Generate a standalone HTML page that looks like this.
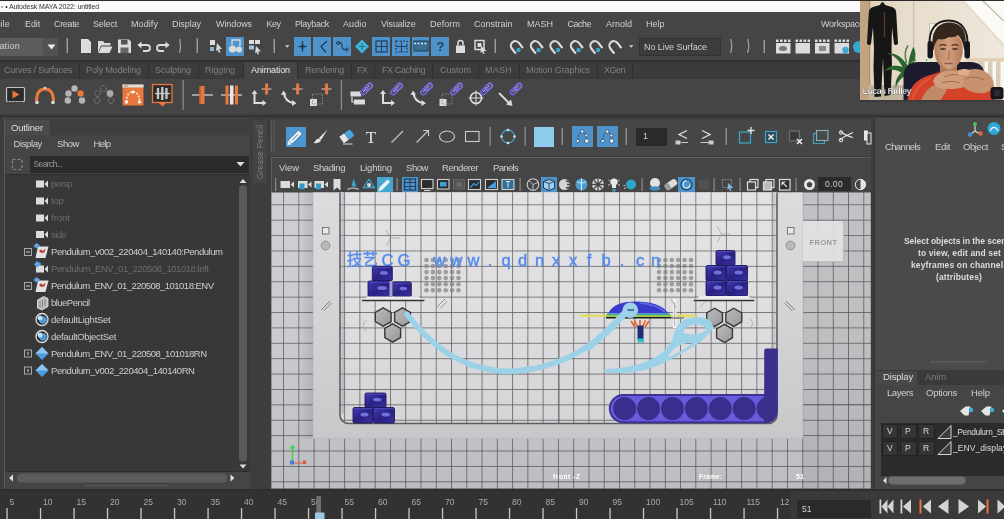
<!DOCTYPE html>
<html><head><meta charset="utf-8"><title>Autodesk MAYA 2022: untitled</title>
<style>
html,body{margin:0;padding:0;background:#444;}
#r{position:relative;width:1004px;height:519px;overflow:hidden;background:#444;font-family:"Liberation Sans","Noto Sans CJK SC",sans-serif;}
#r div,#r span,#r svg{position:absolute;white-space:nowrap;}
#r span{display:block;}
#r{filter:blur(0.350px);}
</style></head>
<body><div id="r">
<div style="left:0px;top:0px;width:1004px;height:11.5px;background:#fafafa;"></div>
<div style="left:0px;top:0px;width:1004px;height:1px;background:#2a2a2a;"></div>
<span style="left:1px;top:0.80px;font-size:7px;line-height:11px;color:#333;letter-spacing:-0.124px;">▫ • Autodesk MAYA 2022: untitled</span>
<div style="left:0px;top:11.5px;width:1004px;height:24.5px;background:#454545;"></div>
<span style="left:-5.5px;top:18.00px;font-size:9px;line-height:13px;color:#d0d0d0;letter-spacing:0.249px;">File</span>
<span style="left:25px;top:18.00px;font-size:9px;line-height:13px;color:#d0d0d0;letter-spacing:-0.127px;">Edit</span>
<span style="left:54px;top:18.00px;font-size:9px;line-height:13px;color:#d0d0d0;letter-spacing:-0.336px;">Create</span>
<span style="left:93px;top:18.00px;font-size:9px;line-height:13px;color:#d0d0d0;letter-spacing:-0.169px;">Select</span>
<span style="left:131px;top:18.00px;font-size:9px;line-height:13px;color:#d0d0d0;letter-spacing:0.082px;">Modify</span>
<span style="left:172px;top:18.00px;font-size:9px;line-height:13px;color:#d0d0d0;letter-spacing:-0.073px;">Display</span>
<span style="left:216px;top:18.00px;font-size:9px;line-height:13px;color:#d0d0d0;letter-spacing:-0.073px;">Windows</span>
<span style="left:266.5px;top:18.00px;font-size:9px;line-height:13px;color:#d0d0d0;letter-spacing:-0.503px;">Key</span>
<span style="left:295px;top:18.00px;font-size:9px;line-height:13px;color:#d0d0d0;letter-spacing:-0.315px;">Playback</span>
<span style="left:343px;top:18.00px;font-size:9px;line-height:13px;color:#d0d0d0;letter-spacing:0.096px;">Audio</span>
<span style="left:381px;top:18.00px;font-size:9px;line-height:13px;color:#d0d0d0;letter-spacing:-0.151px;">Visualize</span>
<span style="left:430px;top:18.00px;font-size:9px;line-height:13px;color:#d0d0d0;letter-spacing:0.082px;">Deform</span>
<span style="left:474px;top:18.00px;font-size:9px;line-height:13px;color:#d0d0d0;letter-spacing:-0.002px;">Constrain</span>
<span style="left:527px;top:18.00px;font-size:9px;line-height:13px;color:#d0d0d0;letter-spacing:-0.001px;">MASH</span>
<span style="left:567.5px;top:18.00px;font-size:9px;line-height:13px;color:#d0d0d0;letter-spacing:-0.504px;">Cache</span>
<span style="left:606px;top:18.00px;font-size:9px;line-height:13px;color:#d0d0d0;letter-spacing:-0.003px;">Arnold</span>
<span style="left:646px;top:18.00px;font-size:9px;line-height:13px;color:#d0d0d0;letter-spacing:-0.003px;">Help</span>
<span style="left:821px;top:18.00px;font-size:9px;line-height:13px;color:#d0d0d0;letter-spacing:-0.235px;">Workspace:</span>
<div style="left:0px;top:36px;width:1004px;height:24px;background:#454545;"></div>
<div style="left:0px;top:37.5px;width:43px;height:18.5px;background:#5c5c5c;"></div>
<div style="left:43px;top:37.5px;width:15px;height:18.5px;background:#525252;"></div>
<span style="left:-22px;top:40.00px;font-size:9px;line-height:13px;color:#d0d0d0;letter-spacing:0.219px;">Animation</span>
<div style="left:0px;top:59.5px;width:1004px;height:2px;background:#2f2f2f;"></div>
<div style="left:639px;top:38px;width:82px;height:18px;background:#3c3c3c;box-sizing:border-box;border:1px solid #333;"></div>
<span style="left:644px;top:40.50px;font-size:9px;line-height:13px;color:#d0d0d0;letter-spacing:-0.069px;">No Live Surface</span>
<div style="left:226px;top:37px;width:18.4px;height:19px;background:#4f93ca;"></div>
<div style="left:293.5px;top:37px;width:17.9px;height:19px;background:#4f93ca;"></div>
<div style="left:313px;top:37px;width:18.4px;height:19px;background:#4f93ca;"></div>
<div style="left:333px;top:37px;width:18.4px;height:19px;background:#4f93ca;"></div>
<div style="left:372px;top:37px;width:18.4px;height:19px;background:#4f93ca;"></div>
<div style="left:392px;top:37px;width:18.4px;height:19px;background:#4f93ca;"></div>
<div style="left:411.5px;top:37px;width:17.9px;height:19px;background:#4f93ca;"></div>
<div style="left:431px;top:37px;width:18.4px;height:19px;background:#4f93ca;"></div>
<div style="left:0px;top:61.5px;width:1004px;height:17px;background:#3b3b3b;"></div>
<div style="left:244px;top:61.5px;width:53px;height:17px;background:#464646;"></div>
<span style="left:4px;top:64.00px;font-size:9px;line-height:13px;color:#808080;letter-spacing:-0.208px;">Curves / Surfaces</span>
<span style="left:86px;top:64.00px;font-size:9px;line-height:13px;color:#808080;letter-spacing:-0.118px;">Poly Modeling</span>
<span style="left:155px;top:64.00px;font-size:9px;line-height:13px;color:#808080;letter-spacing:-0.114px;">Sculpting</span>
<span style="left:205px;top:64.00px;font-size:9px;line-height:13px;color:#808080;letter-spacing:-0.075px;">Rigging</span>
<span style="left:251px;top:64.00px;font-size:9px;line-height:13px;color:#e8e8e8;letter-spacing:-0.114px;">Animation</span>
<span style="left:305px;top:64.00px;font-size:9px;line-height:13px;color:#808080;letter-spacing:-0.281px;">Rendering</span>
<span style="left:357px;top:64.00px;font-size:9px;line-height:13px;color:#808080;letter-spacing:-0.751px;">FX</span>
<span style="left:382px;top:64.00px;font-size:9px;line-height:13px;color:#808080;letter-spacing:-0.403px;">FX Caching</span>
<span style="left:440px;top:64.00px;font-size:9px;line-height:13px;color:#808080;letter-spacing:-0.002px;">Custom</span>
<span style="left:485px;top:64.00px;font-size:9px;line-height:13px;color:#808080;letter-spacing:0.249px;">MASH</span>
<span style="left:526px;top:64.00px;font-size:9px;line-height:13px;color:#808080;letter-spacing:-0.102px;">Motion Graphics</span>
<span style="left:604px;top:64.00px;font-size:9px;line-height:13px;color:#808080;letter-spacing:-0.504px;">XGen</span>
<div style="left:79px;top:62px;width:1px;height:16px;background:#2e2e2e;"></div>
<div style="left:148px;top:62px;width:1px;height:16px;background:#2e2e2e;"></div>
<div style="left:198px;top:62px;width:1px;height:16px;background:#2e2e2e;"></div>
<div style="left:243px;top:62px;width:1px;height:16px;background:#2e2e2e;"></div>
<div style="left:297px;top:62px;width:1px;height:16px;background:#2e2e2e;"></div>
<div style="left:351px;top:62px;width:1px;height:16px;background:#2e2e2e;"></div>
<div style="left:374px;top:62px;width:1px;height:16px;background:#2e2e2e;"></div>
<div style="left:432px;top:62px;width:1px;height:16px;background:#2e2e2e;"></div>
<div style="left:478px;top:62px;width:1px;height:16px;background:#2e2e2e;"></div>
<div style="left:519px;top:62px;width:1px;height:16px;background:#2e2e2e;"></div>
<div style="left:597px;top:62px;width:1px;height:16px;background:#2e2e2e;"></div>
<div style="left:632px;top:62px;width:1px;height:16px;background:#2e2e2e;"></div>
<div style="left:0px;top:78.5px;width:1004px;height:36px;background:#454545;"></div>
<div style="left:0px;top:114px;width:1004px;height:4px;background:#3a3a3a;"></div>
<div style="left:0px;top:115.5px;width:1004px;height:1.5px;background:#303030;"></div>
<svg width="1004" height="120" viewBox="0 0 1004 120" style="left:0;top:0"><rect x="66.5" y="38" width="1.5" height="15" fill="#9a9a9a"/><path d="M47.5 44.5h8l-4 5z" fill="#eee"/><path d="M81 39h7l3 3v11h-10z" fill="#dcdcdc"/><path d="M98 41h5l1.5 2h6v2.5h-9.5l-3 7.5zM101.5 46.5h11l-3 6.5h-11z" fill="#dcdcdc"/><path d="M118 39.5h11l2 2v11.5h-13z" fill="#dcdcdc"/><rect x="121" y="40" width="6.5" height="4.5" fill="#555"/><rect x="120.5" y="47.5" width="8" height="5.5" fill="#666"/><path d="M138.5 45h8.5a3 3 0 0 1 0 6h-4" fill="none" stroke="#dcdcdc" stroke-width="1.8"/><path d="M141.5 41.5l-4 3.5 4 3.5z" fill="#dcdcdc"/><path d="M168.5 45h-8.5a3 3 0 0 0 0 6h4" fill="none" stroke="#dcdcdc" stroke-width="1.8"/><path d="M165.5 41.5l4 3.5-4 3.500z" fill="#dcdcdc"/><path d="M179.5 39q2 7 0 14" fill="none" stroke="#9a9a9a" stroke-width="1.3"/><rect x="196.5" y="38" width="1.5" height="15" fill="#9a9a9a"/><rect x="210" y="40" width="5" height="5" fill="#dcdcdc"/><rect x="210" y="47" width="4" height="4" fill="#7fb7dd"/><path d="M217 43l5 6h-3l1.5 3-1.5.8-1.5-3-1.500 1.500z" fill="#dcdcdc"/><circle cx="232.5" cy="49" r="3.5" fill="#dcdcdc"/><circle cx="239" cy="49.500" r="3" fill="#dcdcdc"/><path d="M232 45v-5h8v6" fill="none" stroke="#dcdcdc" stroke-width="1.3"/><rect x="249" y="40" width="5" height="4" fill="#dcdcdc"/><rect x="255" y="40" width="5" height="4" fill="#dcdcdc"/><rect x="249" y="45.500" width="5" height="4" fill="#9fc6e6"/><path d="M256 46l5 5.500h-3l1 2.500-1.400.6-1.100-2.500-1.500 1.500z" fill="#dcdcdc"/><rect x="273.500" y="39" width="1.5" height="14" fill="#9a9a9a"/><path d="M285 45h4.500l-2.250 3z" fill="#bbb"/><path d="M298 46.500h9M302.500 41v11" stroke="#1f3f5c" stroke-width="1.200" fill="none"/><circle cx="302.500" cy="46.500" r="1.800" fill="none" stroke="#1f3f5c"/><path d="M327 41l-6 5.500 5 6" stroke="#1f3f5c" stroke-width="1.300" fill="none"/><path d="M338 43q4-2 4 3t5 3" stroke="#1f3f5c" stroke-width="1.300" fill="none"/><circle cx="338" cy="43" r="1.500" fill="none" stroke="#1f3f5c"/><circle cx="347" cy="49.500" r="1.500" fill="none" stroke="#1f3f5c"/><path d="M362 39.500l7 7-7 7-7-7z" fill="#3fb6d8"/><path d="M358.500 46.500h7M362 43v7" stroke="#2a6f8a" stroke-width="1"/><rect x="376" y="41" width="11" height="11" fill="none" stroke="#1f3f5c" stroke-width="1.200"/><path d="M376 46.500h11M381.500 41v11" stroke="#1f3f5c" stroke-width="1"/><rect x="396" y="41" width="11" height="11" fill="none" stroke="#1f3f5c" stroke-width="1.200" stroke-dasharray="2 1.500"/><path d="M396 46.500h11M401.500 41v11" stroke="#1f3f5c" stroke-width="1"/><rect x="414" y="41" width="14" height="10" fill="#3a7092" stroke="#1f3f5c" stroke-width="1"/><path d="M414 43.500h14" stroke="#cfe6f5" stroke-width="1.500" stroke-dasharray="2 1.500"/><text x="440.500" y="51" font-size="13" font-weight="bold" fill="#1f3f5c" text-anchor="middle" font-family="Liberation Sans,sans-serif">?</text><rect x="456" y="45.500" width="9" height="7.500" fill="#dcdcdc"/><path d="M458 45.500v-2.500a2.500 2.500 0 0 1 5 0v2.500" fill="none" stroke="#dcdcdc" stroke-width="1.500"/><rect x="475" y="40.500" width="9" height="9" fill="none" stroke="#dcdcdc" stroke-width="1.500"/><rect x="477.500" y="43" width="4" height="4" fill="#dcdcdc"/><path d="M481 46l5.500 5h-3l1 2.500-1.400.6-1.100-2.500-1.500 1.500z" fill="#dcdcdc"/><rect x="494.500" y="39" width="1.500" height="14" fill="#9a9a9a"/><g transform="rotate(-38 516 46.500)"><path d="M511.5 52v-6.500a4.500 4.500 0 0 1 9 0v6.500" fill="none" stroke="#dcdcdc" stroke-width="2.200"/></g><circle cx="518.5" cy="50" r="2.200" fill="#3aa7c8"/><g transform="rotate(-38 536 46.500)"><path d="M531.5 52v-6.500a4.500 4.500 0 0 1 9 0v6.500" fill="none" stroke="#dcdcdc" stroke-width="2.200"/></g><circle cx="538.5" cy="50" r="2.200" fill="#3aa7c8"/><g transform="rotate(-38 555.5 46.500)"><path d="M551.0 52v-6.500a4.500 4.500 0 0 1 9 0v6.500" fill="none" stroke="#dcdcdc" stroke-width="2.200"/></g><circle cx="558.0" cy="50" r="2.200" fill="#3aa7c8"/><g transform="rotate(-38 576 46.500)"><path d="M571.5 52v-6.500a4.500 4.500 0 0 1 9 0v6.500" fill="none" stroke="#dcdcdc" stroke-width="2.200"/></g><circle cx="578.5" cy="50" r="2.200" fill="#3aa7c8"/><g transform="rotate(-38 595.5 46.500)"><path d="M591.0 52v-6.500a4.500 4.500 0 0 1 9 0v6.500" fill="none" stroke="#dcdcdc" stroke-width="2.200"/></g><circle cx="598.0" cy="50" r="2.200" fill="#3aa7c8"/><g transform="rotate(-38 614.5 46.500)"><path d="M610.0 52v-6.500a4.500 4.500 0 0 1 9 0v6.500" fill="none" stroke="#dcdcdc" stroke-width="2.200"/></g><path d="M629 45h4.500l-2.250 3z" fill="#bbb"/><path d="M730.500 39q2.500 7 0 14M747.500 39q2.500 7 0 14" fill="none" stroke="#9a9a9a" stroke-width="1.300"/><rect x="763.500" y="40" width="1.500" height="13" fill="#9a9a9a"/><rect x="776" y="43" width="14.500" height="10.500" fill="#dcdcdc"/><path d="M776 40.700h14.500" stroke="#dcdcdc" stroke-width="2.600" stroke-dasharray="2.600 1.400"/><rect x="795.5" y="43" width="14.500" height="10.500" fill="#dcdcdc"/><path d="M795.5 40.700h14.500" stroke="#dcdcdc" stroke-width="2.600" stroke-dasharray="2.600 1.400"/><rect x="815" y="43" width="14.500" height="10.500" fill="#dcdcdc"/><path d="M815 40.700h14.500" stroke="#dcdcdc" stroke-width="2.600" stroke-dasharray="2.600 1.400"/><rect x="834.5" y="43" width="14.500" height="10.500" fill="#dcdcdc"/><path d="M834.5 40.700h14.500" stroke="#dcdcdc" stroke-width="2.600" stroke-dasharray="2.600 1.400"/><ellipse cx="783" cy="48.500" rx="4" ry="2.500" fill="#777"/><rect x="819" y="46" width="7" height="5" fill="#888"/><circle cx="845.500" cy="50" r="3.200" fill="#3aa7d8"/><circle cx="859" cy="47" r="6" fill="#35a9d6"/><rect x="6.500" y="87.500" width="18" height="14" rx="1" fill="#2c2c2c" stroke="#c4c4c4" stroke-width="1.200"/><path d="M8 101h15" stroke="#2c2c2c" stroke-width="1" stroke-dasharray="1.500 1.500"/><path d="M12.500 90.500l7 4-7 4z" fill="#e8783c"/><path d="M36.500 101q0-12 8.500-12t8.500 12" fill="none" stroke="#e8783c" stroke-width="3"/><circle cx="37" cy="102.500" r="1.800" fill="#dcdcdc"/><circle cx="53" cy="102.500" r="1.800" fill="#dcdcdc"/><circle cx="45" cy="88" r="1.300" fill="#dcdcdc"/><circle cx="68.5" cy="93.5" r="3.200" fill="#b4b4b4"/><circle cx="67.8" cy="100.5" r="3.200" fill="#b4b4b4"/><circle cx="74.5" cy="88.5" r="3.200" fill="#b4b4b4"/><circle cx="80.5" cy="93.5" r="3.200" fill="#e8783c"/><circle cx="82" cy="100.5" r="3.200" fill="#b4b4b4"/><circle cx="97.5" cy="93.5" r="2.900" fill="none" stroke="#8a8a8a" stroke-width="1" stroke-dasharray="1.500 1"/><circle cx="97" cy="100.5" r="2.900" fill="none" stroke="#8a8a8a" stroke-width="1" stroke-dasharray="1.500 1"/><circle cx="103.5" cy="88.5" r="2.900" fill="none" stroke="#8a8a8a" stroke-width="1" stroke-dasharray="1.500 1"/><circle cx="111" cy="100.5" r="2.900" fill="none" stroke="#8a8a8a" stroke-width="1" stroke-dasharray="1.500 1"/><circle cx="110" cy="93.5" r="3.400" fill="#a9a9a9"/><rect x="122.500" y="84.500" width="21" height="21" fill="#e8783c"/><rect x="122.500" y="84.500" width="21" height="3" fill="#ddd"/><path d="M126.500 102q0-10 6.500-10t6.500 10" fill="none" stroke="#fbe9dd" stroke-width="1.800" stroke-dasharray="1.800 1.600"/><path d="M124.500 86h3" stroke="#444" stroke-width="1.200" stroke-dasharray="1 1"/><circle cx="126.500" cy="102" r="1.600" fill="#fff"/><circle cx="139.500" cy="102" r="1.600" fill="#fff"/><circle cx="133" cy="92" r="1.400" fill="#fff"/><rect x="152.500" y="84.500" width="19.500" height="18" fill="#2e2e2e" stroke="#e8783c" stroke-width="1.300"/><path d="M155 93.500h15" stroke="#c8c8c8" stroke-width="1.300"/><path d="M158 88v11M162.300 87v13M166.500 88v11" stroke="#c8c8c8" stroke-width="2.300"/><path d="M159 103h7l-3.500 3.500z" fill="#e8783c"/><rect x="182.500" y="80" width="1.300" height="30" fill="#8a8a8a"/><path d="M192 95h21" stroke="#cfcfcf" stroke-width="1.300"/><rect x="199.500" y="86" width="5" height="18" fill="#e8783c"/><rect x="199.500" y="86" width="1.200" height="18" fill="#b85a28"/><path d="M221 95h21" stroke="#cfcfcf" stroke-width="1.300"/><rect x="225.500" y="85.500" width="3" height="19" fill="#e8783c"/><rect x="230" y="85.500" width="3.500" height="19" fill="#e6e6e6"/><rect x="235" y="85.500" width="3" height="19" fill="#e8783c"/><path d="M254.500 92v11h9" fill="none" stroke="#dcdcdc" stroke-width="2"/><path d="M251.500 94l3-4 3 4zM262.500 100l4 3-4 3z" fill="#dcdcdc"/><path d="M261.5 89h10" stroke="#e9cdbb" stroke-width="1"/><rect x="265.1" y="83.5" width="3" height="11" fill="#e8783c"/><path d="M284 93q1 9 10 10" fill="none" stroke="#dcdcdc" stroke-width="2.200"/><path d="M281 95l2.500-4.500 3 4zM292 100l4.500 3.200-4.500 2.800z" fill="#dcdcdc"/><path d="M292.5 89h10" stroke="#e9cdbb" stroke-width="1"/><rect x="296.1" y="83.5" width="3" height="11" fill="#e8783c"/><rect x="310" y="99" width="7" height="7" fill="#dcdcdc"/><rect x="312.500" y="94" width="10" height="10" fill="none" stroke="#8a8a8a" stroke-dasharray="1.500 1.200"/><path d="M321.5 89h10" stroke="#e9cdbb" stroke-width="1"/><rect x="325.1" y="83.5" width="3" height="11" fill="#e8783c"/><rect x="340.800" y="80" width="1.300" height="30" fill="#8a8a8a"/><rect x="350.500" y="91.500" width="10.500" height="5" fill="#dcdcdc"/><rect x="354" y="99.500" width="11" height="5" fill="#dcdcdc"/><path d="M352 97v5h2" fill="none" stroke="#dcdcdc" stroke-width="1.200"/><g transform="rotate(-45 366.5 89)"><rect x="359.5" y="86.7" width="8" height="4.600" rx="2.300" fill="none" stroke="#6d62cf" stroke-width="1.800"/><rect x="365.5" y="86.7" width="8" height="4.600" rx="2.300" fill="none" stroke="#7a70dc" stroke-width="1.800"/><path d="M362.0 88.7h3M368.0 88.7h3" stroke="#e0dcff" stroke-width="0.900"/></g><path d="M383 92v11h9" fill="none" stroke="#dcdcdc" stroke-width="2"/><path d="M380 94l3-4 3 4zM391 100l4 3-4 3z" fill="#dcdcdc"/><g transform="rotate(-45 396.5 89)"><rect x="389.5" y="86.7" width="8" height="4.600" rx="2.300" fill="none" stroke="#6d62cf" stroke-width="1.800"/><rect x="395.5" y="86.7" width="8" height="4.600" rx="2.300" fill="none" stroke="#7a70dc" stroke-width="1.800"/><path d="M392.0 88.7h3M398.0 88.7h3" stroke="#e0dcff" stroke-width="0.900"/></g><path d="M413.500 93q1 9 10 10" fill="none" stroke="#dcdcdc" stroke-width="2.200"/><path d="M410.500 95l2.500-4.500 3 4zM421.500 100l4.500 3.200-4.500 2.800z" fill="#dcdcdc"/><g transform="rotate(-45 426.5 89)"><rect x="419.5" y="86.7" width="8" height="4.600" rx="2.300" fill="none" stroke="#6d62cf" stroke-width="1.800"/><rect x="425.5" y="86.7" width="8" height="4.600" rx="2.300" fill="none" stroke="#7a70dc" stroke-width="1.800"/><path d="M422.0 88.7h3M428.0 88.7h3" stroke="#e0dcff" stroke-width="0.900"/></g><rect x="439.500" y="99" width="7" height="7" fill="#dcdcdc"/><rect x="442" y="94" width="10" height="10" fill="none" stroke="#8a8a8a" stroke-dasharray="1.500 1.200"/><g transform="rotate(-45 456.5 89)"><rect x="449.5" y="86.7" width="8" height="4.600" rx="2.300" fill="none" stroke="#6d62cf" stroke-width="1.800"/><rect x="455.5" y="86.7" width="8" height="4.600" rx="2.300" fill="none" stroke="#7a70dc" stroke-width="1.800"/><path d="M452.0 88.7h3M458.0 88.7h3" stroke="#e0dcff" stroke-width="0.900"/></g><circle cx="476" cy="98" r="5.500" fill="none" stroke="#dcdcdc" stroke-width="1.600"/><path d="M468.500 98h15M476 90.500v15" stroke="#dcdcdc" stroke-width="1.100"/><g transform="rotate(-45 486.5 89)"><rect x="479.5" y="86.7" width="8" height="4.600" rx="2.300" fill="none" stroke="#6d62cf" stroke-width="1.800"/><rect x="485.5" y="86.7" width="8" height="4.600" rx="2.300" fill="none" stroke="#7a70dc" stroke-width="1.800"/><path d="M482.0 88.7h3M488.0 88.7h3" stroke="#e0dcff" stroke-width="0.900"/></g><path d="M499 93l10 10" stroke="#dcdcdc" stroke-width="1.800"/><path d="M512.500 106l-6.500-1.500 5-5z" fill="#dcdcdc"/><g transform="rotate(-45 516 89)"><rect x="509" y="86.7" width="8" height="4.600" rx="2.300" fill="none" stroke="#6d62cf" stroke-width="1.800"/><rect x="515" y="86.7" width="8" height="4.600" rx="2.300" fill="none" stroke="#7a70dc" stroke-width="1.800"/><path d="M511.5 88.7h3M517.5 88.7h3" stroke="#e0dcff" stroke-width="0.900"/></g></svg>
<div style="left:0px;top:117px;width:1004px;height:373px;background:#3d3d3d;"></div>
<div style="left:252.5px;top:120px;width:14.5px;height:62.5px;background:#444444;"></div>
<span style="left:228.750px;top:146px;width:62px;height:12px;line-height:12px;font-size:8.500px;color:#7c7c7c;transform:rotate(-90deg);text-align:center;letter-spacing:0.100px">Grease Pencil</span>
<div style="left:269.5px;top:118.5px;width:601.5px;height:37.5px;background:#464646;"></div>
<div style="left:285.75px;top:127px;width:19.75px;height:19.75px;background:#4b97d4;"></div>
<div style="left:534px;top:127px;width:19.5px;height:19.5px;background:#8fcbea;"></div>
<div style="left:572px;top:126px;width:20.5px;height:21px;background:#4f93ca;"></div>
<div style="left:597px;top:126px;width:20.5px;height:21px;background:#4f93ca;"></div>
<div style="left:636px;top:128px;width:30.5px;height:17.5px;background:#2a2a2a;"></div>
<span style="left:643px;top:130.00px;font-size:9px;line-height:13px;color:#cfcfcf;letter-spacing:0.000px;">1</span>
<div style="left:270.5px;top:156.5px;width:600.5px;height:36.5px;background:#454545;"></div>
<div style="left:270.5px;top:156.5px;width:600.5px;height:1px;background:#5e5e5e;"></div>
<div style="left:270.5px;top:156.5px;width:1px;height:333px;background:#5e5e5e;"></div>
<span style="left:279px;top:161.25px;font-size:9.5px;line-height:13.5px;color:#d0d0d0;letter-spacing:-0.105px;">View</span>
<span style="left:313px;top:161.25px;font-size:9.5px;line-height:13.5px;color:#d0d0d0;letter-spacing:-0.409px;">Shading</span>
<span style="left:360px;top:161.25px;font-size:9.5px;line-height:13.5px;color:#d0d0d0;letter-spacing:-0.160px;">Lighting</span>
<span style="left:406px;top:161.25px;font-size:9.5px;line-height:13.5px;color:#d0d0d0;letter-spacing:-0.441px;">Show</span>
<span style="left:442px;top:161.25px;font-size:9.5px;line-height:13.5px;color:#d0d0d0;letter-spacing:-0.451px;">Renderer</span>
<span style="left:493px;top:161.25px;font-size:9.5px;line-height:13.5px;color:#d0d0d0;letter-spacing:-0.674px;">Panels</span>
<div style="left:377px;top:176.5px;width:16px;height:16px;background:#45a6d0;"></div>
<div style="left:402px;top:176.5px;width:16px;height:16px;background:#4f93ca;"></div>
<div style="left:541px;top:176.5px;width:16px;height:16px;background:#4f93ca;"></div>
<div style="left:678px;top:176.5px;width:17px;height:16px;background:#4f93ca;"></div>
<div style="left:818px;top:177px;width:32.5px;height:13.5px;background:#2b2b2b;"></div>
<span style="left:825px;top:177.75px;font-size:8.5px;line-height:12.5px;color:#d0d0d0;letter-spacing:0.365px;">0.00</span>
<svg width="1004" height="519" viewBox="0 0 1004 519" style="left:0;top:0;font-family:'Liberation Sans','Noto Sans CJK SC',sans-serif"><defs><pattern id="grid" x="283.050" y="204.300" width="15.270" height="15.390" patternUnits="userSpaceOnUse"><rect width="15.270" height="15.390" fill="#cecfd2"/><path d="M0.500 0v15.390M0 0.500h15.270" stroke="#5c5c60" stroke-width="0.750"/></pattern><pattern id="grid2" x="283.050" y="204.300" width="15.270" height="15.390" patternUnits="userSpaceOnUse"><rect width="15.270" height="15.390" fill="#e3e3e6"/><path d="M0.500 0v15.390M0 0.500h15.270" stroke="#5c5c60" stroke-width="0.750"/></pattern><linearGradient id="shade" x1="0" y1="0" x2="0" y2="1"><stop offset="0" stop-color="#000" stop-opacity="0"/><stop offset="0.500" stop-color="#000" stop-opacity="0.020"/><stop offset="1" stop-color="#000" stop-opacity="0.085"/></linearGradient><linearGradient id="shadeI" x1="0" y1="0" x2="0" y2="1"><stop offset="0" stop-color="#000" stop-opacity="0"/><stop offset="0.500" stop-color="#000" stop-opacity="0.020"/><stop offset="1" stop-color="#000" stop-opacity="0.065"/></linearGradient><linearGradient id="frameg" x1="0" y1="0" x2="0" y2="1"><stop offset="0" stop-color="#dcdcde"/><stop offset="0.500" stop-color="#d4d4d7"/><stop offset="1" stop-color="#c8c8cb"/></linearGradient><linearGradient id="lsh" x1="0" y1="0" x2="1" y2="0"><stop offset="0" stop-color="#000" stop-opacity="0"/><stop offset="1" stop-color="#000" stop-opacity="0.110"/></linearGradient><linearGradient id="cube" x1="0" y1="0" x2="1" y2="1"><stop offset="0" stop-color="#463cb4"/><stop offset="0.500" stop-color="#2a2182"/><stop offset="1" stop-color="#3a309e"/></linearGradient><linearGradient id="hexg" x1="0" y1="0" x2="1" y2="1"><stop offset="0" stop-color="#bcbcbe"/><stop offset="1" stop-color="#98989a"/></linearGradient><filter id="b1"><feGaussianBlur stdDeviation="0.600"/></filter></defs><rect x="271.5" y="192.5" width="599.5" height="296" fill="url(#grid)"/><rect x="271.5" y="192.5" width="599.5" height="296" fill="url(#shade)"/><rect x="299" y="192.5" width="14" height="246" fill="url(#lsh)"/><rect x="803" y="192.5" width="68" height="296" fill="#000" opacity="0.060"/><path d="M803 404.600H871" stroke="#48484c" stroke-width="1" opacity="0.450"/><path d="M313 192.500H803V438.500H313z" fill="url(#frameg)"/><path d="M340 192.500V415a8.500 8.500 0 0 0 8.500 8.500H768.500a8.500 8.500 0 0 0 8.500-8.500V192.500z" fill="url(#grid2)"/><path d="M340 192.500V415a8.500 8.500 0 0 0 8.500 8.500H768.500a8.500 8.500 0 0 0 8.500-8.500V192.500z" fill="url(#shadeI)"/><path d="M559.400 192.500V423" stroke="#48484c" stroke-width="1" opacity="0.400"/><path d="M342.800 192.500V414" stroke="#9a9a9e" stroke-width="2.600" opacity="0.450"/><path d="M774.200 192.500V414" stroke="#9a9a9e" stroke-width="2.600" opacity="0.350"/><path d="M340 192.500V415a8.500 8.500 0 0 0 8.500 8.500H768.500a8.500 8.500 0 0 0 8.500-8.500V192.500" fill="none" stroke="#5e5e62" stroke-width="1.600"/><path d="M313 192.500V438.500H803V192.500" fill="none" stroke="#b4b4b8" stroke-width="0.800" opacity="0.700"/><rect x="322.5" y="227.500" width="6.500" height="6.500" fill="#e8e8e8" stroke="#777" stroke-width="1"/><circle cx="325.5" cy="245.500" r="4.500" fill="#b9b9bb" stroke="#8c8c8c" stroke-width="0.800"/><rect x="787.5" y="227.500" width="6.500" height="6.500" fill="#e8e8e8" stroke="#777" stroke-width="1"/><circle cx="790.5" cy="245.500" r="4.500" fill="#b9b9bb" stroke="#8c8c8c" stroke-width="0.800"/><path d="M321 310l9-9M323.500 311l8-8" stroke="#777" stroke-width="0.900"/><path d="M786 301l9 9M784.500 303l8 8" stroke="#777" stroke-width="0.900"/><rect x="803" y="221" width="40.500" height="40.500" fill="#e3e3e4" opacity="0.920"/><path d="M803 261.500h40.500v-40.500" fill="none" stroke="#bdbdbd" stroke-width="1"/><text x="823.500" y="245" font-size="7.500" font-weight="bold" fill="#9a9a9a" text-anchor="middle" letter-spacing="0.400">FRONT</text><path d="M386 230l4.500 8h9M390.500 238l-4 8" stroke="#8a8a8a" stroke-width="0.800" fill="none" opacity="0.800"/><path d="M717 226l4.500 8h9M721.500 234l-4 8" stroke="#9a9a9a" stroke-width="0.800" fill="none" opacity="0.800"/><circle cx="426.5" cy="260.0" r="2.300" fill="#808083" opacity="0.700"/><circle cx="426.5" cy="266.1" r="2.300" fill="#808083" opacity="0.700"/><circle cx="426.5" cy="272.1" r="2.300" fill="#808083" opacity="0.700"/><circle cx="426.5" cy="278.1" r="2.300" fill="#808083" opacity="0.700"/><circle cx="426.5" cy="284.2" r="2.300" fill="#808083" opacity="0.700"/><circle cx="426.5" cy="290.2" r="2.300" fill="#808083" opacity="0.700"/><circle cx="432.9" cy="260.0" r="2.300" fill="#808083" opacity="0.700"/><circle cx="432.9" cy="266.1" r="2.300" fill="#808083" opacity="0.700"/><circle cx="432.9" cy="272.1" r="2.300" fill="#808083" opacity="0.700"/><circle cx="432.9" cy="278.1" r="2.300" fill="#808083" opacity="0.700"/><circle cx="432.9" cy="284.2" r="2.300" fill="#808083" opacity="0.700"/><circle cx="432.9" cy="290.2" r="2.300" fill="#808083" opacity="0.700"/><circle cx="439.3" cy="260.0" r="2.300" fill="#808083" opacity="0.700"/><circle cx="439.3" cy="266.1" r="2.300" fill="#808083" opacity="0.700"/><circle cx="439.3" cy="272.1" r="2.300" fill="#808083" opacity="0.700"/><circle cx="439.3" cy="278.1" r="2.300" fill="#808083" opacity="0.700"/><circle cx="439.3" cy="284.2" r="2.300" fill="#808083" opacity="0.700"/><circle cx="439.3" cy="290.2" r="2.300" fill="#808083" opacity="0.700"/><circle cx="445.7" cy="260.0" r="2.300" fill="#808083" opacity="0.700"/><circle cx="445.7" cy="266.1" r="2.300" fill="#808083" opacity="0.700"/><circle cx="445.7" cy="272.1" r="2.300" fill="#808083" opacity="0.700"/><circle cx="445.7" cy="278.1" r="2.300" fill="#808083" opacity="0.700"/><circle cx="445.7" cy="284.2" r="2.300" fill="#808083" opacity="0.700"/><circle cx="445.7" cy="290.2" r="2.300" fill="#808083" opacity="0.700"/><circle cx="452.1" cy="260.0" r="2.300" fill="#808083" opacity="0.700"/><circle cx="452.1" cy="266.1" r="2.300" fill="#808083" opacity="0.700"/><circle cx="452.1" cy="272.1" r="2.300" fill="#808083" opacity="0.700"/><circle cx="452.1" cy="278.1" r="2.300" fill="#808083" opacity="0.700"/><circle cx="452.1" cy="284.2" r="2.300" fill="#808083" opacity="0.700"/><circle cx="452.1" cy="290.2" r="2.300" fill="#808083" opacity="0.700"/><circle cx="458.5" cy="260.0" r="2.300" fill="#808083" opacity="0.700"/><circle cx="458.5" cy="266.1" r="2.300" fill="#808083" opacity="0.700"/><circle cx="458.5" cy="272.1" r="2.300" fill="#808083" opacity="0.700"/><circle cx="458.5" cy="278.1" r="2.300" fill="#808083" opacity="0.700"/><circle cx="458.5" cy="284.2" r="2.300" fill="#808083" opacity="0.700"/><circle cx="458.5" cy="290.2" r="2.300" fill="#808083" opacity="0.700"/><circle cx="659.0" cy="260.0" r="2.300" fill="#808083" opacity="0.700"/><circle cx="659.0" cy="266.1" r="2.300" fill="#808083" opacity="0.700"/><circle cx="659.0" cy="272.1" r="2.300" fill="#808083" opacity="0.700"/><circle cx="659.0" cy="278.1" r="2.300" fill="#808083" opacity="0.700"/><circle cx="659.0" cy="284.2" r="2.300" fill="#808083" opacity="0.700"/><circle cx="659.0" cy="290.2" r="2.300" fill="#808083" opacity="0.700"/><circle cx="665.4" cy="260.0" r="2.300" fill="#808083" opacity="0.700"/><circle cx="665.4" cy="266.1" r="2.300" fill="#808083" opacity="0.700"/><circle cx="665.4" cy="272.1" r="2.300" fill="#808083" opacity="0.700"/><circle cx="665.4" cy="278.1" r="2.300" fill="#808083" opacity="0.700"/><circle cx="665.4" cy="284.2" r="2.300" fill="#808083" opacity="0.700"/><circle cx="665.4" cy="290.2" r="2.300" fill="#808083" opacity="0.700"/><circle cx="671.8" cy="260.0" r="2.300" fill="#808083" opacity="0.700"/><circle cx="671.8" cy="266.1" r="2.300" fill="#808083" opacity="0.700"/><circle cx="671.8" cy="272.1" r="2.300" fill="#808083" opacity="0.700"/><circle cx="671.8" cy="278.1" r="2.300" fill="#808083" opacity="0.700"/><circle cx="671.8" cy="284.2" r="2.300" fill="#808083" opacity="0.700"/><circle cx="671.8" cy="290.2" r="2.300" fill="#808083" opacity="0.700"/><circle cx="678.2" cy="260.0" r="2.300" fill="#808083" opacity="0.700"/><circle cx="678.2" cy="266.1" r="2.300" fill="#808083" opacity="0.700"/><circle cx="678.2" cy="272.1" r="2.300" fill="#808083" opacity="0.700"/><circle cx="678.2" cy="278.1" r="2.300" fill="#808083" opacity="0.700"/><circle cx="678.2" cy="284.2" r="2.300" fill="#808083" opacity="0.700"/><circle cx="678.2" cy="290.2" r="2.300" fill="#808083" opacity="0.700"/><circle cx="684.6" cy="260.0" r="2.300" fill="#808083" opacity="0.700"/><circle cx="684.6" cy="266.1" r="2.300" fill="#808083" opacity="0.700"/><circle cx="684.6" cy="272.1" r="2.300" fill="#808083" opacity="0.700"/><circle cx="684.6" cy="278.1" r="2.300" fill="#808083" opacity="0.700"/><circle cx="684.6" cy="284.2" r="2.300" fill="#808083" opacity="0.700"/><circle cx="684.6" cy="290.2" r="2.300" fill="#808083" opacity="0.700"/><circle cx="691.0" cy="260.0" r="2.300" fill="#808083" opacity="0.700"/><circle cx="691.0" cy="266.1" r="2.300" fill="#808083" opacity="0.700"/><circle cx="691.0" cy="272.1" r="2.300" fill="#808083" opacity="0.700"/><circle cx="691.0" cy="278.1" r="2.300" fill="#808083" opacity="0.700"/><circle cx="691.0" cy="284.2" r="2.300" fill="#808083" opacity="0.700"/><circle cx="691.0" cy="290.2" r="2.300" fill="#808083" opacity="0.700"/><path d="M437 307l8-8M440 308.500l7-7" stroke="#8a8a8c" stroke-width="0.900"/><path d="M366 320l-3 5.500 3 5.500" stroke="#aaa" stroke-width="0.800" fill="none"/><path d="M700 307l8-8" stroke="#8a8a8c" stroke-width="0.900" opacity="0.600"/><path d="M750 318l3 5.500-3 5.500" stroke="#aaa" stroke-width="0.800" fill="none"/><text y="265.500" font-size="16.500" fill="#558aee" stroke="#558aee" stroke-width="0.450" text-anchor="middle" x="439.500 456.500 473.500 490 506 522.500 539.500 556 573 589 606 622 640 655.500">www.qdnxxfb.cn</text><text y="265.500" font-size="16.500" fill="#558aee" stroke="#558aee" stroke-width="0.450" text-anchor="middle" x="387.500 404">CG</text><text x="347" y="265" font-size="15.500" fill="#558aee" stroke="#558aee" stroke-width="0.350">技艺</text><rect x="372.3" y="266.3" width="20" height="14.7" rx="1.500" fill="url(#cube)" stroke="#1d175c" stroke-width="0.900"/><ellipse cx="383.90000000000003" cy="272.915" rx="4.0" ry="1.911" fill="#7d86f2" opacity="0.800"/><path d="M373.3 267.5h18" stroke="#5a52d0" stroke-width="1" opacity="0.700"/><rect x="368" y="281" width="24.3" height="15.6" rx="1.500" fill="url(#cube)" stroke="#1d175c" stroke-width="0.900"/><ellipse cx="382.094" cy="288.02" rx="4.86" ry="2.028" fill="#7d86f2" opacity="0.800"/><path d="M369 282.2h22.3" stroke="#5a52d0" stroke-width="1" opacity="0.700"/><rect x="392.3" y="282" width="19" height="14.5" rx="1.500" fill="url(#cube)" stroke="#1d175c" stroke-width="0.900"/><ellipse cx="403.32" cy="288.525" rx="3.8000000000000003" ry="1.885" fill="#7d86f2" opacity="0.800"/><path d="M393.3 283.2h17" stroke="#5a52d0" stroke-width="1" opacity="0.700"/><path d="M362 300.400l6-4h50l6.400 4z" fill="#ececee"/><path d="M362 300.400h62.400" stroke="#333" stroke-width="1.500"/><rect x="389.500" y="281" width="3" height="15" fill="#d8d8f0" opacity="0.700"/><rect x="716" y="250.5" width="19" height="15" rx="1.500" fill="url(#cube)" stroke="#1d175c" stroke-width="0.900"/><ellipse cx="727.02" cy="257.25" rx="3.8000000000000003" ry="1.9500000000000002" fill="#7d86f2" opacity="0.800"/><path d="M717 251.7h17" stroke="#5a52d0" stroke-width="1" opacity="0.700"/><rect x="706" y="265.5" width="20" height="15.5" rx="1.500" fill="url(#cube)" stroke="#1d175c" stroke-width="0.900"/><ellipse cx="717.6" cy="272.475" rx="4.0" ry="2.015" fill="#7d86f2" opacity="0.800"/><path d="M707 266.7h18" stroke="#5a52d0" stroke-width="1" opacity="0.700"/><rect x="726.5" y="265.5" width="21" height="15.5" rx="1.500" fill="url(#cube)" stroke="#1d175c" stroke-width="0.900"/><ellipse cx="738.68" cy="272.475" rx="4.2" ry="2.015" fill="#7d86f2" opacity="0.800"/><path d="M727.5 266.7h19" stroke="#5a52d0" stroke-width="1" opacity="0.700"/><rect x="706" y="280.5" width="20" height="15.5" rx="1.500" fill="url(#cube)" stroke="#1d175c" stroke-width="0.900"/><ellipse cx="717.6" cy="287.475" rx="4.0" ry="2.015" fill="#7d86f2" opacity="0.800"/><path d="M707 281.7h18" stroke="#5a52d0" stroke-width="1" opacity="0.700"/><rect x="726.5" y="280.5" width="21" height="15.5" rx="1.500" fill="url(#cube)" stroke="#1d175c" stroke-width="0.900"/><ellipse cx="738.68" cy="287.475" rx="4.2" ry="2.015" fill="#7d86f2" opacity="0.800"/><path d="M727.5 281.7h19" stroke="#5a52d0" stroke-width="1" opacity="0.700"/><path d="M693.800 300.400l6-4.500h48l6.500 4.500z" fill="#ececee"/><path d="M693.800 300.400h60.500" stroke="#333" stroke-width="1.500"/><rect x="365" y="393" width="21" height="14.5" rx="1.500" fill="url(#cube)" stroke="#1d175c" stroke-width="0.900"/><ellipse cx="377.18" cy="399.525" rx="4.2" ry="1.885" fill="#7d86f2" opacity="0.800"/><path d="M366 394.2h19" stroke="#5a52d0" stroke-width="1" opacity="0.700"/><rect x="353" y="407.5" width="20" height="15.5" rx="1.500" fill="url(#cube)" stroke="#1d175c" stroke-width="0.900"/><ellipse cx="364.6" cy="414.475" rx="4.0" ry="2.015" fill="#7d86f2" opacity="0.800"/><path d="M354 408.7h18" stroke="#5a52d0" stroke-width="1" opacity="0.700"/><rect x="373.5" y="407.5" width="21" height="15.5" rx="1.500" fill="url(#cube)" stroke="#1d175c" stroke-width="0.900"/><ellipse cx="385.68" cy="414.475" rx="4.2" ry="2.015" fill="#7d86f2" opacity="0.800"/><path d="M374.5 408.7h19" stroke="#5a52d0" stroke-width="1" opacity="0.700"/><polygon points="391.1,321.6 383.2,326.1 375.3,321.6 375.3,312.4 383.2,307.9 391.1,312.4" fill="url(#hexg)" stroke="#383838" stroke-width="1.400"/><polygon points="410.4,321.6 402.5,326.1 394.6,321.6 394.6,312.4 402.5,307.9 410.4,312.4" fill="url(#hexg)" stroke="#383838" stroke-width="1.400"/><polygon points="400.6,337.6 392.7,342.1 384.8,337.6 384.8,328.4 392.7,323.9 400.6,328.4" fill="url(#hexg)" stroke="#383838" stroke-width="1.400"/><polygon points="722.5,321.9 714.6,326.4 706.7,321.9 706.7,312.8 714.6,308.2 722.5,312.8" fill="url(#hexg)" stroke="#383838" stroke-width="1.400"/><polygon points="741.7,321.9 733.8,326.4 725.9,321.9 725.9,312.8 733.8,308.2 741.7,312.8" fill="url(#hexg)" stroke="#383838" stroke-width="1.400"/><polygon points="732.4,337.9 724.5,342.5 716.6,337.9 716.6,328.8 724.5,324.3 732.4,328.8" fill="url(#hexg)" stroke="#383838" stroke-width="1.400"/><path d="M407 314.5C409.8 317.8 417.2 327.5 424 334C430.8 340.5 440.0 348.3 448 353.5C456.0 358.7 464.0 362.2 472 365C480.0 367.8 488.8 369.5 496 370.5C503.2 371.5 507.2 371.7 515 371C522.8 370.3 534.3 368.7 543 366.5C551.7 364.3 559.0 361.7 567 358C575.0 354.3 584.2 349.1 591 344.5C597.8 339.9 605.2 332.8 608 330.5" fill="none" stroke="#9bd2e8" stroke-width="5.600" stroke-linecap="round"/><path d="M605 369.6C607.0 368.9 612.8 368.8 618 368C623.2 367.2 630.2 366.6 636 365C641.8 363.4 648.3 360.9 653 358.5C657.7 356.1 660.9 353.6 664 350.7C667.1 347.8 669.8 344.1 671.5 341C673.2 337.9 673.3 334.8 674.5 332C675.7 329.2 676.6 326.7 678.5 324.5C680.4 322.3 682.9 320.2 686 319C689.1 317.8 693.5 317.3 697 317.3C700.5 317.3 704.4 317.9 707 319C709.6 320.1 711.6 322.3 712.5 324C713.4 325.7 713.9 326.6 712.5 329C711.1 331.4 708.0 335.3 704 338.7C700.0 342.1 694.4 346.0 688.5 349.6C682.6 353.2 675.6 357.3 668.6 360.6C661.6 363.9 654.0 367.4 646.7 369.4C639.4 371.4 631.8 372.3 625 372.8C618.2 373.3 609.3 373.0 606 372.5C602.7 372.0 603.0 370.4 605 369.6ZM683.5 331.5C683.2 330.2 685.8 327.7 688 326.5C690.2 325.3 694.2 324.5 697 324.5C699.8 324.5 703.0 325.6 704.5 326.5C706.0 327.4 706.8 328.9 706 330C705.2 331.1 702.7 332.4 700 333.2C697.3 333.9 692.8 334.8 690 334.5C687.2 334.2 683.8 332.8 683.5 331.5ZM692 342.6C690.7 342.4 683.2 343.8 680 345C676.8 346.2 674.9 348.0 673 350C671.1 352.0 667.4 356.7 668.5 357C669.6 357.3 676.2 353.6 679.5 351.8C682.8 350.1 685.9 348.0 688 346.5C690.1 345.0 693.3 342.9 692 342.6Z" fill="#9bd2e8" fill-rule="evenodd"/><path d="M580 315.700H696" stroke="#e3d95a" stroke-width="2.600" opacity="0.900"/><path d="M608.300 313.500C612 304 624 301.400 636 301.400C650 301.400 663 305 668.600 313.500z" fill="#3b3acb"/><path d="M640 303C650 304 660 307 665 312" fill="none" stroke="#6a78ee" stroke-width="1.600" opacity="0.800"/><path d="M607 314.300H670" stroke="#36a8b0" stroke-width="1.800"/><path d="M606 316H671" stroke="#8cc04a" stroke-width="1.400"/><path d="M606 317.800H672" stroke="#1c1c1c" stroke-width="1.500"/><path d="M631 321l4 6M649 321l-4 6M634.500 320.500l3 6.500M645.500 320.500l-3 6.500M640 320v6" stroke="#e5632b" stroke-width="1.700"/><rect x="637.500" y="325.500" width="6" height="14" fill="#1f2d78"/><rect x="637.500" y="338.500" width="6.500" height="4" fill="#36bccb"/><path d="M588 347.500C601 338 614 325 626 312" fill="none" stroke="#9bd2e8" stroke-width="7" stroke-linecap="round"/><circle cx="630.300" cy="310.300" r="7.800" fill="#9bd2e8"/><path d="M627.500 310h6.500" stroke="#2d3a9a" stroke-width="1.300"/><path d="M674.700 299v29" stroke="#f2f2f2" stroke-width="3.600"/><path d="M674.700 302v24" stroke="#8f8f8f" stroke-width="0.700"/><path d="M671 318h13" stroke="#8a8a8a" stroke-width="1.800"/><path d="M671 299l5 9" stroke="#aaa" stroke-width="1"/><rect x="608.800" y="394" width="169" height="29.200" rx="14.600" fill="#3f3496"/><rect x="610.800" y="396" width="165" height="25.200" rx="12.600" fill="#675cdb"/><clipPath id="belt"><rect x="610.800" y="396" width="165" height="25.200" rx="12.600"/></clipPath><g clip-path="url(#belt)"><circle cx="624.7" cy="408.600" r="11.500" fill="#382e8d"/><circle cx="648.6" cy="408.600" r="11.500" fill="#382e8d"/><circle cx="672.5" cy="408.600" r="11.500" fill="#382e8d"/><circle cx="696.4" cy="408.600" r="11.500" fill="#382e8d"/><circle cx="720.3" cy="408.600" r="11.500" fill="#382e8d"/><circle cx="744.2" cy="408.600" r="11.500" fill="#382e8d"/><circle cx="768.1" cy="408.600" r="11.500" fill="#382e8d"/></g><path d="M766.200 348.400h11.600v62.800a12 12 0 0 1-12 12h-1.600v-72.800a2 2 0 0 1 2-2z" fill="#3a308c"/><path d="M292.500 463v-14" stroke="#3bd04a" stroke-width="1.200"/><circle cx="292.500" cy="447.500" r="2.200" fill="#43d657"/><path d="M292.500 463h12" stroke="#e05a3a" stroke-width="1"/><rect x="290" y="460.500" width="4" height="4" fill="#4a7be0"/><rect x="303" y="460.500" width="3" height="3.500" fill="#e05a3a"/><text x="553" y="478.500" font-size="6.500" font-weight="bold" fill="#fff" textLength="27">front -Z</text><text x="699" y="478.500" font-size="6.500" font-weight="bold" fill="#fff" textLength="23">Frame:</text><text x="796" y="478.800" font-size="7" font-weight="bold" fill="#fff">51</text><rect x="870.800" y="192.5" width="1.500" height="296" fill="#3a3a3a"/></svg>
<div style="left:3.5px;top:118px;width:246.5px;height:372px;background:#454545;"></div>
<div style="left:3.5px;top:118px;width:1.2px;height:372px;background:#5a5a5a;"></div>
<div style="left:5px;top:119px;width:245px;height:16px;background:#3f3f3f;"></div>
<div style="left:5px;top:119.5px;width:44.5px;height:15.5px;background:#4a4a4a;"></div>
<span style="left:11px;top:120.75px;font-size:9.5px;line-height:13.5px;color:#dedede;letter-spacing:-0.158px;">Outliner</span>
<span style="left:13.5px;top:137.25px;font-size:9.5px;line-height:13.5px;color:#d2d2d2;letter-spacing:-0.379px;">Display</span>
<span style="left:57px;top:137.25px;font-size:9.5px;line-height:13.5px;color:#d2d2d2;letter-spacing:-0.441px;">Show</span>
<span style="left:93.5px;top:137.25px;font-size:9.5px;line-height:13.5px;color:#d2d2d2;letter-spacing:-0.635px;">Help</span>
<div style="left:30px;top:156px;width:218.5px;height:17px;background:#2b2b2b;"></div>
<span style="left:33.5px;top:158.25px;font-size:8.5px;line-height:12.5px;color:#9a9a9a;letter-spacing:-0.613px;">Search...</span>
<div style="left:5px;top:174px;width:245px;height:297px;background:#383838;"></div>
<div style="left:5px;top:174px;width:245px;height:1px;background:#2e2e2e;"></div>
<span style="left:51px;top:177.25px;font-size:9.5px;line-height:13.5px;color:#6c6c6c;letter-spacing:-0.553px;">persp</span>
<span style="left:51px;top:194.25px;font-size:9.5px;line-height:13.5px;color:#6c6c6c;letter-spacing:-0.235px;">top</span>
<span style="left:51px;top:211.25px;font-size:9.5px;line-height:13.5px;color:#6c6c6c;letter-spacing:-0.002px;">front</span>
<span style="left:51px;top:227.75px;font-size:9.5px;line-height:13.5px;color:#6c6c6c;letter-spacing:-0.607px;">side</span>
<span style="left:51px;top:245.25px;font-size:9.5px;line-height:13.5px;color:#cecece;letter-spacing:-0.459px;">Pendulum_v002_220404_140140:Pendulum</span>
<span style="left:51px;top:262.25px;font-size:9.5px;line-height:13.5px;color:#6c6c6c;letter-spacing:-0.448px;">Pendulum_ENV_01_220508_101018:left</span>
<span style="left:51px;top:279.25px;font-size:9.5px;line-height:13.5px;color:#cecece;letter-spacing:-0.518px;">Pendulum_ENV_01_220508_101018:ENV</span>
<span style="left:51px;top:296.25px;font-size:9.5px;line-height:13.5px;color:#cecece;letter-spacing:-0.534px;">bluePencil</span>
<span style="left:51px;top:312.75px;font-size:9.5px;line-height:13.5px;color:#cecece;letter-spacing:-0.259px;">defaultLightSet</span>
<span style="left:51px;top:329.75px;font-size:9.5px;line-height:13.5px;color:#cecece;letter-spacing:-0.327px;">defaultObjectSet</span>
<span style="left:51px;top:346.75px;font-size:9.5px;line-height:13.5px;color:#cecece;letter-spacing:-0.504px;">Pendulum_ENV_01_220508_101018RN</span>
<span style="left:51px;top:363.75px;font-size:9.5px;line-height:13.5px;color:#cecece;letter-spacing:-0.443px;">Pendulum_v002_220404_140140RN</span>
<div style="left:5px;top:471px;width:245px;height:1px;background:#2e2e2e;"></div>
<svg width="270" height="519" viewBox="0 0 270 519" style="left:0;top:0"><rect x="36" y="180.5" width="8" height="7" fill="#dcdcdc"/><path d="M44.500 184l3.500-3.500v7z" fill="#dcdcdc"/><rect x="36" y="197.5" width="8" height="7" fill="#dcdcdc"/><path d="M44.500 201l3.500-3.500v7z" fill="#dcdcdc"/><rect x="36" y="214.5" width="8" height="7" fill="#dcdcdc"/><path d="M44.500 218l3.500-3.500v7z" fill="#dcdcdc"/><rect x="36" y="231.0" width="8" height="7" fill="#dcdcdc"/><path d="M44.500 234.5l3.500-3.500v7z" fill="#dcdcdc"/><rect x="24.500" y="248.5" width="7" height="7" fill="none" stroke="#a8a8a8" stroke-width="1"/><path d="M26 252h4" stroke="#ccc" stroke-width="1"/><path d="M38 246.5h10.500l-3 11.500h-10z" fill="#e2e2e2"/><path d="M36.500 243l3.500 2.500-3.500 3-3-2.500z" fill="#5aa6e8"/><path d="M40.500 253l5-4.500-1 4z" fill="#c8372d"/><circle cx="41" cy="251" r="1.600" fill="#c8372d"/><rect x="36" y="265.5" width="8" height="7" fill="#dcdcdc"/><path d="M44.500 269l3.500-3.500v7z" fill="#dcdcdc"/><path d="M37 261l4.500 3-4.500 3.500-3-3z" fill="#5aa6e8"/><rect x="24.500" y="282.5" width="7" height="7" fill="none" stroke="#a8a8a8" stroke-width="1"/><path d="M26 286h4" stroke="#ccc" stroke-width="1"/><path d="M38 280.5h10.500l-3 11.500h-10z" fill="#e2e2e2"/><path d="M36.500 277l3.500 2.500-3.500 3-3-2.500z" fill="#5aa6e8"/><path d="M40.500 287l5-4.500-1 4z" fill="#c8372d"/><circle cx="41" cy="285" r="1.600" fill="#c8372d"/><path d="M37.500 300l6-3.500 4.500 2v8l-6 3.500-4.500-2z" fill="#bdbdbd" stroke="#e6e6e6" stroke-width="0.800"/><path d="M40 301v7M42.500 300v7M45 299v7" stroke="#777" stroke-width="0.800"/><circle cx="42" cy="319.5" r="6" fill="#2a2a2a" stroke="#e2e2e2" stroke-width="1.300"/><circle cx="43" cy="320.0" r="3.800" fill="#4f97cf"/><circle cx="40" cy="318.0" r="2.500" fill="#bfe0f4"/><circle cx="42" cy="336.5" r="6" fill="#2a2a2a" stroke="#e2e2e2" stroke-width="1.300"/><circle cx="43" cy="337.0" r="3.800" fill="#4f97cf"/><circle cx="40" cy="335.0" r="2.500" fill="#bfe0f4"/><rect x="24.500" y="350.0" width="7" height="7" fill="none" stroke="#a8a8a8" stroke-width="1"/><path d="M28 352.0v3" stroke="#ccc" stroke-width="1"/><path d="M42 347.0l6.500 6.500-6.500 6.500-6.500-6.500z" fill="#4f9be0"/><path d="M42 347.0l6.500 6.500h-13z" fill="#8cc4f2"/><rect x="24.500" y="367.0" width="7" height="7" fill="none" stroke="#a8a8a8" stroke-width="1"/><path d="M28 369.0v3" stroke="#ccc" stroke-width="1"/><path d="M42 364.0l6.500 6.500-6.500 6.500-6.500-6.500z" fill="#4f9be0"/><path d="M42 364.0l6.500 6.500h-13z" fill="#8cc4f2"/><rect x="12.500" y="159.500" width="9.500" height="10" fill="none" stroke="#8a8a8a" stroke-width="1.200" stroke-dasharray="3 2"/><path d="M236.500 162h8l-4 4.500z" fill="#e0e0e0"/><path d="M239.500 183h7l-3.500-4z" fill="#dedede"/><path d="M239.500 464.500h7l-3.500 4z" fill="#dedede"/><rect x="239" y="185.500" width="8" height="276" rx="3" fill="#595959"/><rect x="17" y="473.500" width="210" height="9" rx="4" fill="#5c5c5c"/><path d="M13 474.500v7l-4-3.500zM230.500 474.500v7l4-3.500z" fill="#dedede"/><path d="M86 485.500h82" stroke="#777" stroke-width="1.200" stroke-dasharray="1.200 1.500"/></svg>
<div style="left:873.5px;top:117.5px;width:1.5px;height:372px;background:#303030;"></div>
<div style="left:875px;top:118px;width:129px;height:372px;background:#4a4a4a;"></div>
<span style="left:885px;top:140.25px;font-size:9.5px;line-height:13.5px;color:#cfcfcf;letter-spacing:-0.642px;">Channels</span>
<span style="left:935px;top:140.25px;font-size:9.5px;line-height:13.5px;color:#cfcfcf;letter-spacing:-0.342px;">Edit</span>
<span style="left:963px;top:140.25px;font-size:9.5px;line-height:13.5px;color:#cfcfcf;letter-spacing:-0.409px;">Object</span>
<span style="left:1001px;top:140.25px;font-size:9.5px;line-height:13.5px;color:#cfcfcf;letter-spacing:-1.191px;">Show</span>
<span style="left:904px;top:234.75px;font-size:8.5px;line-height:12.5px;color:#dcdcdc;letter-spacing:-0.061px;font-weight:bold;">Select objects in the scene</span>
<span style="left:918px;top:246.75px;font-size:8.5px;line-height:12.5px;color:#dcdcdc;letter-spacing:0.122px;font-weight:bold;">to view, edit and set</span>
<span style="left:911px;top:258.75px;font-size:8.5px;line-height:12.5px;color:#dcdcdc;letter-spacing:0.143px;font-weight:bold;">keyframes on channels</span>
<span style="left:936px;top:270.75px;font-size:8.5px;line-height:12.5px;color:#dcdcdc;letter-spacing:0.135px;font-weight:bold;">(attributes)</span>
<div style="left:876px;top:370px;width:128px;height:120px;background:#454545;"></div>
<div style="left:876px;top:370px;width:128px;height:15px;background:#3a3a3a;"></div>
<div style="left:876px;top:370.5px;width:41px;height:14.5px;background:#484848;"></div>
<span style="left:883px;top:370.25px;font-size:9.5px;line-height:13.5px;color:#dedede;letter-spacing:-0.164px;">Display</span>
<span style="left:925px;top:370.25px;font-size:9.5px;line-height:13.5px;color:#7b7b7b;letter-spacing:-0.161px;">Anim</span>
<span style="left:887px;top:386.25px;font-size:9.5px;line-height:13.5px;color:#cfcfcf;letter-spacing:-0.419px;">Layers</span>
<span style="left:926px;top:386.25px;font-size:9.5px;line-height:13.5px;color:#cfcfcf;letter-spacing:-0.248px;">Options</span>
<span style="left:971px;top:386.25px;font-size:9.5px;line-height:13.5px;color:#cfcfcf;letter-spacing:-0.135px;">Help</span>
<div style="left:880.5px;top:422.5px;width:124px;height:53px;background:#2b2b2b;"></div>
<div style="left:882px;top:424px;width:16px;height:15px;background:#353535;box-sizing:border-box;border:1px solid #222;"></div>
<span style="left:887.0px;top:425.25px;font-size:8.5px;line-height:12.5px;color:#d8d8d8;letter-spacing:0.000px;">V</span>
<div style="left:899.5px;top:424px;width:17px;height:15px;background:#353535;box-sizing:border-box;border:1px solid #222;"></div>
<span style="left:905.0px;top:425.25px;font-size:8.5px;line-height:12.5px;color:#d8d8d8;letter-spacing:0.000px;">P</span>
<div style="left:917.5px;top:424px;width:17px;height:15px;background:#353535;box-sizing:border-box;border:1px solid #222;"></div>
<span style="left:923.0px;top:425.25px;font-size:8.5px;line-height:12.5px;color:#d8d8d8;letter-spacing:0.000px;">R</span>
<div style="left:882px;top:440.5px;width:16px;height:15px;background:#353535;box-sizing:border-box;border:1px solid #222;"></div>
<span style="left:887.0px;top:441.75px;font-size:8.5px;line-height:12.5px;color:#d8d8d8;letter-spacing:0.000px;">V</span>
<div style="left:899.5px;top:440.5px;width:17px;height:15px;background:#353535;box-sizing:border-box;border:1px solid #222;"></div>
<span style="left:905.0px;top:441.75px;font-size:8.5px;line-height:12.5px;color:#d8d8d8;letter-spacing:0.000px;">P</span>
<div style="left:917.5px;top:440.5px;width:17px;height:15px;background:#353535;box-sizing:border-box;border:1px solid #222;"></div>
<span style="left:923.0px;top:441.75px;font-size:8.5px;line-height:12.5px;color:#d8d8d8;letter-spacing:0.000px;">R</span>
<span style="left:953px;top:425.75px;font-size:8.5px;line-height:12.5px;color:#dcdcdc;letter-spacing:-0.404px;">_Pendulum_SET</span>
<span style="left:953px;top:442.25px;font-size:8.5px;line-height:12.5px;color:#dcdcdc;letter-spacing:0.068px;">_ENV_displayL</span>
<svg width="1004" height="519" viewBox="0 0 1004 519" style="left:0;top:0"><path d="M938 438.500h13v-13z" fill="#3a3a3a" stroke="#d8d8d8" stroke-width="1"/><path d="M938 454.500h13v-13z" fill="#3a3a3a" stroke="#d8d8d8" stroke-width="1"/><rect x="888.500" y="476.500" width="77" height="8" rx="4" fill="#6e6e6e"/><path d="M886.500 477v7l-3.500-3.500z" fill="#dedede"/><path d="M931 362h56" stroke="#8a8a8a" stroke-width="1.200" stroke-dasharray="1.200 1.500"/><path d="M960 411l5.500-4.500h5l-2 9h-4z" fill="#e6e6e6"/><circle cx="971" cy="410" r="2.300" fill="#39a9d8"/><path d="M981 411l5.500-4.500h5l-2 9h-4z" fill="#e6e6e6"/><circle cx="992" cy="410" r="2.300" fill="#39a9d8"/><path d="M1002 411l5.500-4.500h5l-2 9h-4z" fill="#e6e6e6"/><circle cx="1013" cy="410" r="2.300" fill="#39a9d8"/><path d="M975 124v7l-5 3.500M975 131l5 3" stroke="#ddd" stroke-width="1.200" fill="none"/><circle cx="975" cy="124" r="2" fill="#49c25a"/><circle cx="970" cy="134.500" r="2.200" fill="#3f8fe0"/><circle cx="980.500" cy="133.500" r="2.200" fill="#e0683a"/><circle cx="994" cy="128.500" r="6.500" fill="#2fa5d8"/><path d="M990.500 131a3.500 3.500 0 0 1 7 0" stroke="#e6f4fb" stroke-width="1.500" fill="none"/></svg>
<div style="left:0px;top:488.5px;width:1004px;height:3px;background:#2e2e2e;"></div>
<div style="left:0px;top:491px;width:1004px;height:28px;background:#3a3a3a;"></div>
<div style="left:0px;top:491px;width:791px;height:28px;background:#323232;"></div>
<div style="left:797px;top:500px;width:73.5px;height:17.5px;background:#2a2a2a;"></div>
<span style="left:802px;top:502.75px;font-size:8.5px;line-height:12.5px;color:#d6d6d6;letter-spacing:0.000px;">51</span>
<svg width="1004" height="519" viewBox="0 0 1004 519" style="left:0;top:0;font-family:'Liberation Sans',sans-serif"><rect x="6.4" y="508" width="1.300" height="11" fill="#c8c8c8"/><text x="9.5" y="505" font-size="8.500" fill="#a9a9a9">5</text><rect x="39.9" y="508" width="1.300" height="11" fill="#c8c8c8"/><text x="43.0" y="505" font-size="8.500" fill="#a9a9a9">10</text><rect x="73.4" y="508" width="1.300" height="11" fill="#c8c8c8"/><text x="76.5" y="505" font-size="8.500" fill="#a9a9a9">15</text><rect x="106.9" y="508" width="1.300" height="11" fill="#c8c8c8"/><text x="110.0" y="505" font-size="8.500" fill="#a9a9a9">20</text><rect x="140.4" y="508" width="1.300" height="11" fill="#c8c8c8"/><text x="143.5" y="505" font-size="8.500" fill="#a9a9a9">25</text><rect x="173.9" y="508" width="1.300" height="11" fill="#c8c8c8"/><text x="177.0" y="505" font-size="8.500" fill="#a9a9a9">30</text><rect x="207.4" y="508" width="1.300" height="11" fill="#c8c8c8"/><text x="210.5" y="505" font-size="8.500" fill="#a9a9a9">35</text><rect x="240.9" y="508" width="1.300" height="11" fill="#c8c8c8"/><text x="244.0" y="505" font-size="8.500" fill="#a9a9a9">40</text><rect x="274.4" y="508" width="1.300" height="11" fill="#c8c8c8"/><text x="277.5" y="505" font-size="8.500" fill="#a9a9a9">45</text><rect x="307.9" y="508" width="1.300" height="11" fill="#c8c8c8"/><text x="311.0" y="505" font-size="8.500" fill="#a9a9a9">50</text><rect x="341.4" y="508" width="1.300" height="11" fill="#c8c8c8"/><text x="344.5" y="505" font-size="8.500" fill="#a9a9a9">55</text><rect x="374.9" y="508" width="1.300" height="11" fill="#c8c8c8"/><text x="378.0" y="505" font-size="8.500" fill="#a9a9a9">60</text><rect x="408.4" y="508" width="1.300" height="11" fill="#c8c8c8"/><text x="411.5" y="505" font-size="8.500" fill="#a9a9a9">65</text><rect x="441.9" y="508" width="1.300" height="11" fill="#c8c8c8"/><text x="445.0" y="505" font-size="8.500" fill="#a9a9a9">70</text><rect x="475.4" y="508" width="1.300" height="11" fill="#c8c8c8"/><text x="478.5" y="505" font-size="8.500" fill="#a9a9a9">75</text><rect x="508.9" y="508" width="1.300" height="11" fill="#c8c8c8"/><text x="512.0" y="505" font-size="8.500" fill="#a9a9a9">80</text><rect x="542.4" y="508" width="1.300" height="11" fill="#c8c8c8"/><text x="545.5" y="505" font-size="8.500" fill="#a9a9a9">85</text><rect x="575.9" y="508" width="1.300" height="11" fill="#c8c8c8"/><text x="579.0" y="505" font-size="8.500" fill="#a9a9a9">90</text><rect x="609.4" y="508" width="1.300" height="11" fill="#c8c8c8"/><text x="612.5" y="505" font-size="8.500" fill="#a9a9a9">95</text><rect x="642.9" y="508" width="1.300" height="11" fill="#c8c8c8"/><text x="646.0" y="505" font-size="8.500" fill="#a9a9a9">100</text><rect x="676.4" y="508" width="1.300" height="11" fill="#c8c8c8"/><text x="679.5" y="505" font-size="8.500" fill="#a9a9a9">105</text><rect x="709.9" y="508" width="1.300" height="11" fill="#c8c8c8"/><text x="713.0" y="505" font-size="8.500" fill="#a9a9a9">110</text><rect x="743.4" y="508" width="1.300" height="11" fill="#c8c8c8"/><text x="746.5" y="505" font-size="8.500" fill="#a9a9a9">115</text><rect x="776.9" y="508" width="1.300" height="11" fill="#c8c8c8"/><text x="780.0" y="505" font-size="8.500" fill="#a9a9a9">12</text><rect x="316.300" y="496" width="4.700" height="23" fill="#707070"/><rect x="315" y="512.500" width="9.500" height="6.500" fill="#9cc6e4"/><rect x="879.500" y="499.500" width="1.800" height="14" fill="#d4d4d4"/><path d="M887.500 499.500v14l-6-7zM893.500 499.500v14l-6-7z" fill="#d4d4d4"/><rect x="900.500" y="499.500" width="1.800" height="14" fill="#d4d4d4"/><path d="M911 499.500v14l-8-7z" fill="#d4d4d4"/><rect x="919.500" y="499.500" width="2" height="14" fill="#e8783c"/><path d="M931 499.500v14l-8-7z" fill="#d4d4d4"/><path d="M948.500 499v15l-10.500-7.500z" fill="#d4d4d4"/><path d="M958.500 499v15l10.500-7.500z" fill="#d4d4d4"/><path d="M978 499.500v14l8-7z" fill="#d4d4d4"/><rect x="986.500" y="499.500" width="2" height="14" fill="#e8783c"/><path d="M997.500 499.500v14l8-7z" fill="#d4d4d4"/></svg>
<svg width="145" height="100" viewBox="0 0 145 100" style="left:859.500px;top:0.500px"><defs><linearGradient id="wall" x1="0" y1="0" x2="1" y2="0"><stop offset="0" stop-color="#dccfb8"/><stop offset="0.350" stop-color="#e7ddcc"/><stop offset="1" stop-color="#efe8dc"/></linearGradient><linearGradient id="skin" x1="0" y1="0" x2="1" y2="0"><stop offset="0" stop-color="#b98260"/><stop offset="0.500" stop-color="#d19f80"/><stop offset="1" stop-color="#b47a58"/></linearGradient><filter id="cb"><feGaussianBlur stdDeviation="0.700"/></filter><clipPath id="cc"><rect x="0" y="0" width="145" height="100"/></clipPath></defs><g clip-path="url(#cc)"><g filter="url(#cb)"><rect x="-3" y="-3" width="151" height="106" fill="url(#wall)"/><path d="M102 -3L148 -3V47z" fill="#fbfaf5"/><path d="M122 -1L148 24" stroke="#bdb6aa" stroke-width="1.200"/><path d="M100 -3L148 49" stroke="#e4dccd" stroke-width="2"/><rect x="-3" y="-3" width="12.500" height="106" fill="#c2a580"/><rect x="9" y="-3" width="1.200" height="90" fill="#ab906c"/><rect x="53" y="0" width="1.300" height="52" fill="#cbbfa8"/><rect x="69.500" y="22.500" width="7.500" height="10" fill="#f2ede2" stroke="#c4baa6" stroke-width="0.800"/><rect x="9" y="84" width="40" height="19" fill="#c2b59e"/><rect x="106" y="57" width="42" height="3.500" fill="#e2cfb4"/><rect x="118" y="60.500" width="30" height="28" fill="#d9ccb8"/><rect x="124.5" y="60.500" width="3.500" height="28" fill="#faf7f1"/><rect x="132.5" y="60.500" width="3.500" height="28" fill="#faf7f1"/><rect x="140.5" y="60.500" width="3.500" height="28" fill="#faf7f1"/><path d="M21.500 1c2 0 3 1.500 3.500 3l7 2c3 1 4 3 4.200 5.500l1.800 31c0 1.500-3.500 2-4 .500l-2-17-.500 22 .500 18-1.500 28-6 1-1.500-38-2 38.500-6.500.500-1-30 .500-18-1-22-2 17c-.500 1.500-4 1-4-.500l1.800-31c.200-2.500 1.200-4.500 4.200-5.500l7-2c.500-1.500 1.500-3 3.500-3z" fill="#121316"/><path d="M24.300 11v25" stroke="#7c4a2a" stroke-width="0.900"/><g transform="translate(48 62) scale(1.350) translate(-48 -62)"><path d="M48 64c-5-7-10-10-16-9 6 1 9 5 12 10-5-2-11-1-13 3 5-2 9-1 12 1-3 3-5 7-4 11 2-5 5-8 8-9l1 7 4-8c4 1 7 3 9 7 0-6-3-9-8-11 5-2 9-1 12 2-3-5-8-7-13-5 2-5 2-9 0-13-2 4-3 8-4 14z" fill="#2d6332"/><path d="M47 62c-2-6-1-10 1-13M50 62c3-3 8-4 12-2" stroke="#4f8a4a" stroke-width="1.200" fill="none"/></g><rect x="56" y="57" width="10" height="6" fill="#e9e2d4"/><path d="M43.500 103v-28c0-9 6-14 15-14h52c9 0 14 5 14 14v28z" fill="#1b1f2e"/><path d="M47 103c1-16 9-25 23-29l13-4h14l12 3c16 4 24 14 27 30z" fill="#d4422b"/><path d="M52 100c3-12 9-19 19-23" stroke="#e86045" stroke-width="2" fill="none" opacity="0.600"/><path d="M80 60h17v12c-5 4-12 4-17 0z" fill="#b07a5a"/><ellipse cx="88.500" cy="49" rx="14.200" ry="19.500" fill="url(#skin)"/><path d="M73.500 50c-4-18 4-28.500 15.500-28.500 12.500 0 20 9 15.500 28.500-1.500-8-3.500-13-6.500-16-3 2-6 2.500-9 2-4 2.500-8 3-11 2-2.500 3-4 7-4.500 12z" fill="#35251c"/><path d="M70 48c-3-20 7-28.500 18.500-28.500S110 28 107 48" fill="none" stroke="#17171a" stroke-width="2"/><rect x="67.500" y="40" width="5.500" height="17.500" rx="2.700" fill="#17171a"/><rect x="104.500" y="40" width="5.500" height="17.500" rx="2.700" fill="#17171a"/><path d="M79.500 44.500q3.500-1.800 7 0M91.500 44.500q3.500-1.800 7 0" stroke="#4a2f22" stroke-width="1.300" fill="none"/><path d="M80.500 48h5M92.500 48h5" stroke="#3a2a22" stroke-width="1.500"/><path d="M89 50v7l-2 1.500" stroke="#a36a4c" stroke-width="1.200" fill="none"/><path d="M84.500 62.500h8" stroke="#8f5444" stroke-width="1.400"/><path d="M77 54c1 8 5 13 11 14.500" stroke="#a87452" stroke-width="1.500" fill="none" opacity="0.600"/><path d="M60 103c2-9 8-17 18-21l9 7-9 14z" fill="#c08a68"/><path d="M73 80c2-6 10-10.500 18-10.500h10c5 0 8 2 10 5l-1 8c-4 4-13 6-23 5.500-8 0-13-3-14-8z" fill="#d09c7a"/><path d="M104 71c6-4 16-4 22 0 6 4 9 11 8 17l-9 4c-10 1-18-2-22-7z" fill="#c9926e"/><path d="M84 76c6-3 14-3 20-1M106 78c6-3 13-2 18 1M82 82c6-2 12-2 18 0" stroke="#a26c4c" stroke-width="1" fill="none"/><path d="M98 69.500c4-2 9-2 12 0l-2 5h-9z" fill="#dcae90"/><rect x="130.500" y="86" width="13" height="12.500" rx="3" fill="#17171a"/><circle cx="137" cy="92" r="3.500" fill="#2c2c30"/></g><text x="2.500" y="93" font-size="9" font-weight="bold" fill="#fff" textLength="49" stroke="#444" stroke-width="0.250" font-family="Liberation Sans,sans-serif">Lucas Ridley</text></g></svg>
<div style="left:859.5px;top:100px;width:144.5px;height:1.5px;background:#3c3c3c;"></div>
<svg width="1004" height="200" viewBox="0 0 1004 200" style="left:0;top:0"><path d="M271.500 121v31M274 121v31" stroke="#7a7a7a" stroke-width="1" stroke-dasharray="1 1.500"/><g transform="rotate(-45 295.600 136.800)"><rect x="287.600" y="134" width="15" height="5.600" rx="1" fill="#e8f2fa" stroke="#2c5f88" stroke-width="0.800"/><path d="M287.600 134l-3.500 2.800 3.500 2.800z" fill="#e8f2fa"/><path d="M291 136.800h8" stroke="#2c5f88" stroke-width="0.800"/></g><path d="M327.500 129.500l-8.500 8.500 2 2z" fill="#e6e6e6"/><path d="M319 138.500c-3 0-3.500 3-5.500 4.500 3 .8 6.500-.5 7.500-2.500z" fill="#e6e6e6"/><g transform="rotate(-35 346.500 136.500)"><rect x="340.500" y="132.500" width="6" height="8" fill="#e6e6e6"/><rect x="346.500" y="132.500" width="7" height="8" rx="1.500" fill="#4aa6d8"/></g><path d="M343 144h9.500" stroke="#ddd" stroke-width="1"/><text x="371" y="143" font-size="17" fill="#e6e6e6" text-anchor="middle" font-family="Liberation Serif,serif">T</text><path d="M391.500 142.500l11.500-11.500" stroke="#cacaca" stroke-width="1.100"/><path d="M416.500 142.500l12-12M423 130.500h5.500v5.500" stroke="#cacaca" stroke-width="1.100" fill="none"/><ellipse cx="447" cy="136.500" rx="7.500" ry="5.500" fill="none" stroke="#cacaca" stroke-width="1.100"/><rect x="465.500" y="131.500" width="13.500" height="10" fill="none" stroke="#cacaca" stroke-width="1.100"/><rect x="489.500" y="127" width="1.300" height="19" fill="#8a8a8a"/><circle cx="508" cy="136.500" r="6.500" fill="none" stroke="#3aa7c8" stroke-width="1.300"/><circle cx="508" cy="130" r="1.300" fill="#ddd"/><circle cx="508" cy="143" r="1.300" fill="#ddd"/><circle cx="501.500" cy="136.500" r="1.300" fill="#ddd"/><circle cx="514.500" cy="136.500" r="1.300" fill="#ddd"/><rect x="524.500" y="127" width="1.300" height="19" fill="#8a8a8a"/><rect x="561.500" y="128" width="1.500" height="17" fill="#8a8a8a"/><path d="M577.25 142q1-10 5-10t5 10" fill="none" stroke="#1f3f5c" stroke-width="1" stroke-dasharray="1.500 1.200"/><circle cx="582.25" cy="131.500" r="1.700" fill="#e8f2fa" stroke="#1f3f5c" stroke-width="0.700"/><circle cx="577.75" cy="141" r="1.700" fill="#e8f2fa" stroke="#1f3f5c" stroke-width="0.700"/><circle cx="586.75" cy="141" r="2.200" fill="#e8f2fa" stroke="#1f3f5c" stroke-width="0.700"/><circle cx="586.25" cy="135.500" r="1.500" fill="#e8f2fa" stroke="#1f3f5c" stroke-width="0.700"/><path d="M602.25 142q1-10 5-10t5 10" fill="none" stroke="#1f3f5c" stroke-width="1" stroke-dasharray="1.500 1.200"/><circle cx="607.25" cy="131.500" r="1.700" fill="#e8f2fa" stroke="#1f3f5c" stroke-width="0.700"/><circle cx="602.75" cy="141" r="1.700" fill="#e8f2fa" stroke="#1f3f5c" stroke-width="0.700"/><circle cx="611.75" cy="141" r="2.200" fill="#e8f2fa" stroke="#1f3f5c" stroke-width="0.700"/><circle cx="611.25" cy="135.500" r="1.500" fill="#e8f2fa" stroke="#1f3f5c" stroke-width="0.700"/><rect x="625.500" y="128" width="1.500" height="17" fill="#8a8a8a"/><path d="M687 130.500l-8 4 8 4" fill="none" stroke="#e0e0e0" stroke-width="1.300"/><rect x="675.500" y="140.500" width="5" height="4" fill="#ccc"/><path d="M681 142.500h7" stroke="#ccc" stroke-width="1"/><path d="M702 130.500l8 4-8 4" fill="none" stroke="#e0e0e0" stroke-width="1.300"/><rect x="708.500" y="140.500" width="5" height="4" fill="#ccc"/><path d="M700.500 142.500h8" stroke="#ccc" stroke-width="1"/><rect x="725.500" y="128" width="1.500" height="17" fill="#8a8a8a"/><rect x="739.500" y="132" width="11" height="11" fill="none" stroke="#3aa7c8" stroke-width="1.200"/><path d="M751 127v7M747.500 130.500h7" stroke="#e6e6e6" stroke-width="1.300"/><rect x="765.500" y="131.500" width="11" height="11" fill="#2e4a58" stroke="#3aa7c8" stroke-width="1.200"/><path d="M768.500 134.500l5 5M773.500 134.500l-5 5" stroke="#f0f0f0" stroke-width="1.500"/><rect x="789.500" y="131" width="10" height="10" fill="#3a3a3a" stroke="#707070" stroke-width="1.200"/><path d="M797 139l5 5M802 139l-5 5" stroke="#f0f0f0" stroke-width="1.500"/><rect x="813.500" y="133.500" width="11" height="10" fill="none" stroke="#3aa7c8" stroke-width="1.100"/><rect x="816.500" y="130.500" width="11.500" height="10" fill="#4a4a4a" stroke="#8ab0c0" stroke-width="1.100"/><path d="M840 131.500c3 2 8 5 13 6M853 132.500c-5 2-9 4-13 7.500" fill="none" stroke="#e6e6e6" stroke-width="1.200"/><circle cx="841" cy="140" r="1.800" fill="none" stroke="#e6e6e6"/><circle cx="841" cy="132.500" r="1.800" fill="none" stroke="#e6e6e6"/><rect x="864" y="130.500" width="4" height="10" fill="#e6e6e6"/><rect x="867" y="133" width="4" height="11" fill="#4a4a4a" stroke="#e6e6e6" stroke-width="1"/><rect x="275" y="178" width="1.200" height="13" fill="#8a8a8a"/><rect x="280.5" y="181.0" width="9.500" height="7" fill="#dcdcdc"/><path d="M290.5 184.5l3.500-3v6z" fill="#dcdcdc"/><rect x="298" y="181.0" width="9.500" height="7" fill="#dcdcdc"/><path d="M308 184.5l3.500-3v6z" fill="#dcdcdc"/><rect x="299.5" y="183.5" width="5" height="6" fill="#2f9ac8"/><rect x="314.5" y="181.0" width="9.500" height="7" fill="#dcdcdc"/><path d="M324.5 184.5l3.500-3v6z" fill="#dcdcdc"/><rect x="316.0" y="183.5" width="5" height="6" fill="#2f9ac8"/><path d="M333.500 179h7v11.500l-3.500-3-3.500 3z" fill="#dcdcdc"/><path d="M353.500 178.500l3 8h-5z" fill="#3aa7c8"/><path d="M347.500 189.500c3-2 8-2 11 0" stroke="#ddd" stroke-width="1.200" fill="none"/><path d="M369 179.500l5.500 8h-11z" fill="none" stroke="#3aa7c8" stroke-width="1.300"/><circle cx="369" cy="185" r="2" fill="#ddd"/><g transform="rotate(-45 385 184.500)"><rect x="378.500" y="182.700" width="12" height="3.600" rx="1" fill="#e8f4fb"/><path d="M378.500 182.700l-3 1.800 3 1.800z" fill="#e8f4fb"/></g><rect x="396.500" y="178" width="1.200" height="13" fill="#8a8a8a"/><rect x="404.500" y="179" width="11" height="11" fill="none" stroke="#1f3f5c" stroke-width="1.200"/><path d="M404.500 182.500h11M404.500 186.500h11M410 179v11" stroke="#1f3f5c" stroke-width="1"/><rect x="421.500" y="179.500" width="11.500" height="9" fill="#2c2c2c" stroke="#cfcfcf" stroke-width="1.100"/><path d="M424 190.500h6.500" stroke="#cfcfcf" stroke-width="1.200"/><rect x="437.500" y="179.500" width="11.500" height="9.500" fill="#2c2c2c" stroke="#cfcfcf" stroke-width="1.100"/><rect x="440" y="182" width="6.500" height="4.500" fill="#3f9fd8"/><rect x="453.500" y="179.500" width="11" height="9.500" fill="#555" stroke="#666" stroke-width="1"/><circle cx="459" cy="184.500" r="2.500" fill="#6c6c6c"/><rect x="468.500" y="179.500" width="12" height="10" fill="#2c2c2c" stroke="#cfcfcf" stroke-width="1.100"/><path d="M470.500 187.500l3.500-4 2.500 2 2.500-3.500" stroke="#3f9fd8" stroke-width="1.200" fill="none"/><rect x="485.500" y="179.500" width="12" height="10" fill="#2c2c2c" stroke="#cfcfcf" stroke-width="1.100"/><path d="M487 188l9-7v7z" fill="#3f9fd8"/><rect x="502" y="179.500" width="12" height="10" fill="#2f6f98" stroke="#cfcfcf" stroke-width="1.100"/><path d="M508 181.500v6M506 181.500h4" stroke="#e6e6e6" stroke-width="1"/><rect x="519.500" y="178" width="1.200" height="13" fill="#8a8a8a"/><circle cx="533" cy="184.500" r="5.800" fill="none" stroke="#cfcfcf" stroke-width="1.100"/><path d="M533 184.500l-4-4M533 184.500l5-2M533 184.500v6" stroke="#cfcfcf" stroke-width="0.900"/><path d="M549 179.500l5.500 2v6.500l-5.500 2.500-5.500-2.500v-6.500z" fill="#9fd0ee" stroke="#1f3f5c" stroke-width="1"/><path d="M543.500 181.500l5.500 2 5.500-2M549 183.500v7" stroke="#1f3f5c" stroke-width="0.900" fill="none"/><circle cx="564.500" cy="184.500" r="5.500" fill="#d6d6d6"/><path d="M566 181l4 1M567 184.500h4M566 188l4-1" stroke="#454545" stroke-width="1.400"/><circle cx="581.500" cy="184.500" r="6" fill="#4a9fd0"/><path d="M577 181.500c3 2 6 2 9 0M581.500 178.500v12" stroke="#d8eefa" stroke-width="1" fill="none"/><circle cx="598" cy="184.500" r="6" fill="#d8d8d8"/><path d="M594 180.500l8 8M602 180.500l-8 8M598 178.500v12M592 184.500h12" stroke="#444" stroke-width="1.300"/><path d="M614 178.500a3.500 3.500 0 0 1 2 6.500v3h-4v-3a3.500 3.500 0 0 1 2-6.500z" fill="#e8e8e8"/><path d="M608.500 180l2 1M619.500 180l-2 1M608 185h2M620 185h-2" stroke="#ddd" stroke-width="0.900"/><rect x="612.500" y="189" width="3" height="2.500" fill="#3aa7c8"/><circle cx="631" cy="184.500" r="5" fill="#2fa5c8"/><path d="M624 188.500l2-1M623.500 185.500h1.500" stroke="#ccc" stroke-width="1"/><rect x="641.500" y="178" width="1.200" height="13" fill="#8a8a8a"/><circle cx="655" cy="183" r="5" fill="#e2e2e2"/><ellipse cx="655" cy="188.500" rx="5.500" ry="2.200" fill="#3f8fc0"/><g transform="rotate(-35 671 184.500)"><rect x="664.500" y="181" width="13" height="7" rx="3" fill="#dcdcdc"/><rect x="664.500" y="181" width="5" height="7" rx="2" fill="#9a9a9a"/></g><circle cx="686.500" cy="184.500" r="5.500" fill="none" stroke="#1f3f5c" stroke-width="1.200"/><path d="M686.500 181a3.500 3.500 0 1 0 3.500 3.500" fill="none" stroke="#d8ecf8" stroke-width="1.200"/><rect x="698" y="179.500" width="11" height="10" fill="#515151"/><rect x="713.500" y="178" width="1.200" height="13" fill="#8a8a8a"/><rect x="722.500" y="179.500" width="9" height="8" fill="none" stroke="#8a8a8a" stroke-dasharray="1.500 1"/><path d="M728 183l5.500 5h-3l1 2.500-1.400.6-1.100-2.500-1.500 1.500z" fill="#7fb7dd"/><rect x="739.500" y="178" width="1.200" height="13" fill="#8a8a8a"/><rect x="750" y="179.500" width="8" height="8" fill="#454545" stroke="#dcdcdc" stroke-width="1.200"/><rect x="747.500" y="182" width="8" height="8" fill="#454545" stroke="#dcdcdc" stroke-width="1.200"/><rect x="766" y="179.500" width="8" height="8" fill="#454545" stroke="#dcdcdc" stroke-width="1.200"/><rect x="763.500" y="182" width="8" height="8" fill="#bbb" stroke="#dcdcdc" stroke-width="1.200"/><rect x="779.500" y="179.500" width="10.500" height="10.500" fill="#2c2c2c" stroke="#dcdcdc" stroke-width="1.200"/><path d="M782 182l5 5M782 182h3.500M782 182v3.500" stroke="#dcdcdc" stroke-width="1.100" fill="none"/><rect x="795.500" y="178" width="1.200" height="13" fill="#8a8a8a"/><circle cx="809.500" cy="184.500" r="5.500" fill="#e6e6e6"/><path d="M809.500 181.500l3 2.200-1.200 3.500h-3.600l-1.200-3.500z" fill="#454545"/><circle cx="860.500" cy="184.500" r="5.200" fill="#e6e6e6"/><path d="M860.500 179.300a5.200 5.200 0 0 0 0 10.400z" fill="#454545"/><circle cx="860.500" cy="184.500" r="5.200" fill="none" stroke="#e6e6e6" stroke-width="1"/></svg>
</div></body></html>
